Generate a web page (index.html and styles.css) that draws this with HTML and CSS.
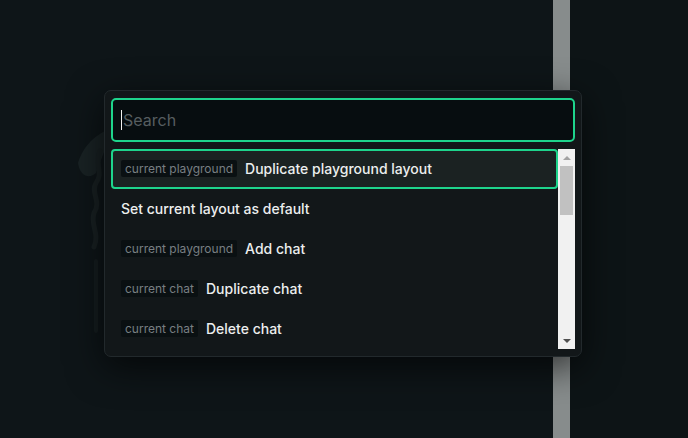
FILE: index.html
```html
<!DOCTYPE html>
<html>

<head>
    <meta charset="utf-8">
    <link rel="stylesheet" href="styles.css">
</head>

<body>
    <div class="app">
        <div class="workspace">
            <svg class="logo" width="420" height="220" viewBox="0 0 420 220">
                <path d="M22 42 C28 22 44 10 60 6 C52 20 46 36 40 52 C34 58 24 56 22 42 Z" fill="#192224" />
                <path d="M44 30 C38 44 48 52 40 62 C34 72 46 80 38 92 C34 104 44 112 38 126" stroke="#182022"
                    stroke-width="5" fill="none" stroke-linecap="round" />
                <path d="M40 140 L40 210" stroke="#151d1f" stroke-width="4" stroke-linecap="round" />
            </svg>
        </div>
        <div class="divider"></div>
        <div class="side"></div>
    </div>

    <div class="palette">
        <div class="search-box">
            <input class="search" type="text" placeholder="Search" autofocus>
            <span class="caret"></span>
        </div>
        <div class="results">
            <ul class="commands">
                <li class="command selected"><span class="scope">current playground</span>Duplicate playground layout</li>
                <li class="command">Set current layout as default</li>
                <li class="command"><span class="scope">current playground</span>Add chat</li>
                <li class="command"><span class="scope">current chat</span>Duplicate chat</li>
                <li class="command"><span class="scope">current chat</span>Delete chat</li>
            </ul>
            <div class="scrollbar">
                <div class="arrow up"></div>
                <div class="track">
                    <div class="thumb"></div>
                </div>
                <div class="arrow down"></div>
            </div>
        </div>
    </div>
</body>

</html>
```

FILE: styles.css
```css
* {
    box-sizing: border-box;
    font-family: Inter, "Noto Sans", sans-serif;
}

html,
body {
    margin: 0;
    height: 100%;
    overflow: hidden;
}

body {
    background-color: #0e1518;
}

.app {
    display: flex;
    height: 100%;
}

.workspace {
    width: 553px;
    display: flex;
    align-items: center;
    padding-left: 56px;
    padding-top: 24px;
}

.divider {
    width: 17px;
    background-color: #878c8c;
}

.side {
    flex: 1;
    background-color: #0d1416;
}

.palette {
    position: absolute;
    left: 104px;
    top: 90px;
    width: 478px;
    padding: 7px 6px;
    background-color: #121719;
    border: 1px solid #22292c;
    border-radius: 7px;
    box-shadow: 0 10px 36px rgba(0, 0, 0, 0.65);
    display: flex;
    flex-direction: column;
    gap: 7px;
}

.search-box {
    position: relative;
}

.search {
    display: block;
    height: 44px;
    width: 100%;
    padding: 0 8px 0 10px;
    background-color: #070d10;
    border: 2px solid #1ed48c;
    border-radius: 5px;
    color: #e8ebeb;
    caret-color: transparent;
    font-size: 16px;
    outline: none;
}

.search::placeholder {
    color: #565d60;
}

.caret {
    position: absolute;
    left: 10px;
    top: 12px;
    width: 1px;
    height: 20px;
    background-color: #f2f2f2;
}

.results {
    display: flex;
    height: 200px;
}

.commands {
    flex: 1;
    list-style: none;
    margin: 0;
    padding: 0;
    overflow: hidden;
}

.command {
    height: 40px;
    display: flex;
    align-items: center;
    gap: 8px;
    padding: 0 8px 1px;
    border: 2px solid transparent;
    border-radius: 4px;
    color: #eceeee;
    font-size: 14px;
    font-weight: 500;
}

.command.selected {
    background-color: #1b2222;
    border-color: #1ed48c;
}

.scope {
    background-color: #0a1012;
    color: #787f82;
    font-size: 12px;
    font-weight: 400;
    padding: 1px 4px;
    border-radius: 2px;
}

.scrollbar {
    width: 17px;
    display: flex;
    flex-direction: column;
    background-color: #f1f1f1;
}

.arrow {
    height: 17px;
    display: flex;
    align-items: center;
    justify-content: center;
}

.arrow::before {
    content: "";
    border-left: 4px solid transparent;
    border-right: 4px solid transparent;
}

.arrow.up::before {
    border-bottom: 4px solid #a3a3a3;
}

.arrow.down::before {
    border-top: 4px solid #505050;
}

.track {
    flex: 1;
    padding: 0 2px;
}

.thumb {
    height: 49px;
    background-color: #c1c1c1;
}
```
